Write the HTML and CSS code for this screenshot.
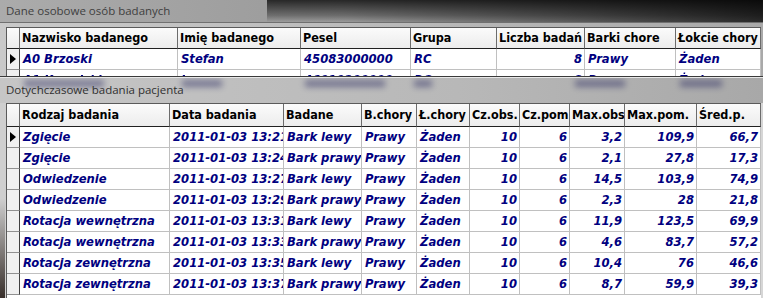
FILE: index.html
```html
<!DOCTYPE html>
<html lang="pl">
<head>
  <meta charset="UTF-8">
  <title>Badania pacjenta</title>
  <link rel="stylesheet" href="styles.css">
</head>
<body>

  <!-- okno z danymi osobowymi (w tle) -->
  <div class="win winTop">
    <div class="caption captionTop">Dane osobowe osób badanych</div>
    <div class="frame">
      <div class="grid gridPeople">
        <div class="row head">
          <div class="sel"></div>
          <div>Nazwisko badanego</div>
          <div>Imię badanego</div>
          <div>Pesel</div>
          <div>Grupa</div>
          <div>Liczba badań</div>
          <div>Barki chore</div>
          <div>Łokcie chory</div>
        </div>
        <div class="row">
          <div class="sel cur"></div>
          <div>A0 Brzoski</div>
          <div>Stefan</div>
          <div>45083000000</div>
          <div>RC</div>
          <div class="num">8</div>
          <div>Prawy</div>
          <div>Żaden</div>
        </div>
        <div class="row peek">
          <div class="sel"></div>
          <div>A1 Kowalski</div>
          <div>Jan</div>
          <div>46010200000</div>
          <div>RC</div>
          <div class="num">8</div>
          <div>Prawy</div>
          <div>Żaden</div>
        </div>
      </div>
    </div>
  </div>

  <!-- okno z badaniami -->
  <div class="win winTests">
    <div class="caption captionTests">
      <div class="glass">
        <i class="g1"></i><i class="g2"></i><i class="g3"></i><i class="g4"></i><i class="g5"></i><i class="g6"></i>
      </div>
      <span class="capText">Dotychczasowe badania pacjenta</span>
    </div>
    <div class="frame">
      <div class="grid gridTests">
        <div class="row head">
          <div class="sel"></div>
          <div>Rodzaj badania</div>
          <div>Data badania</div>
          <div>Badane</div>
          <div>B.chory</div>
          <div>Ł.chory</div>
          <div>Cz.obs.</div>
          <div>Cz.pom</div>
          <div>Max.obs</div>
          <div>Max.pom.</div>
          <div>Śred.p.</div>
        </div>
        <div class="row">
          <div class="sel cur"></div>
          <div>Zgięcie</div><div>2011-01-03 13:21</div><div>Bark lewy</div><div>Prawy</div><div>Żaden</div>
          <div class="num">10</div><div class="num">6</div><div class="num">3,2</div><div class="num">109,9</div><div class="num">66,7</div>
        </div>
        <div class="row">
          <div class="sel"></div>
          <div>Zgięcie</div><div>2011-01-03 13:24</div><div>Bark prawy</div><div>Prawy</div><div>Żaden</div>
          <div class="num">10</div><div class="num">6</div><div class="num">2,1</div><div class="num">27,8</div><div class="num">17,3</div>
        </div>
        <div class="row">
          <div class="sel"></div>
          <div>Odwiedzenie</div><div>2011-01-03 13:27</div><div>Bark lewy</div><div>Prawy</div><div>Żaden</div>
          <div class="num">10</div><div class="num">6</div><div class="num">14,5</div><div class="num">103,9</div><div class="num">74,9</div>
        </div>
        <div class="row">
          <div class="sel"></div>
          <div>Odwiedzenie</div><div>2011-01-03 13:29</div><div>Bark prawy</div><div>Prawy</div><div>Żaden</div>
          <div class="num">10</div><div class="num">6</div><div class="num">2,3</div><div class="num">28</div><div class="num">21,8</div>
        </div>
        <div class="row">
          <div class="sel"></div>
          <div>Rotacja wewnętrzna</div><div>2011-01-03 13:31</div><div>Bark lewy</div><div>Prawy</div><div>Żaden</div>
          <div class="num">10</div><div class="num">6</div><div class="num">11,9</div><div class="num">123,5</div><div class="num">69,9</div>
        </div>
        <div class="row">
          <div class="sel"></div>
          <div>Rotacja wewnętrzna</div><div>2011-01-03 13:33</div><div>Bark prawy</div><div>Prawy</div><div>Żaden</div>
          <div class="num">10</div><div class="num">6</div><div class="num">4,6</div><div class="num">83,7</div><div class="num">57,2</div>
        </div>
        <div class="row">
          <div class="sel"></div>
          <div>Rotacja zewnętrzna</div><div>2011-01-03 13:35</div><div>Bark lewy</div><div>Prawy</div><div>Żaden</div>
          <div class="num">10</div><div class="num">6</div><div class="num">10,4</div><div class="num">76</div><div class="num">46,6</div>
        </div>
        <div class="row">
          <div class="sel"></div>
          <div>Rotacja zewnętrzna</div><div>2011-01-03 13:37</div><div>Bark prawy</div><div>Prawy</div><div>Żaden</div>
          <div class="num">10</div><div class="num">6</div><div class="num">8,7</div><div class="num">59,9</div><div class="num">39,3</div>
        </div>
      </div>
    </div>
  </div>

</body>
</html>
```

FILE: styles.css
```css
* {
  box-sizing: border-box;
}
html, body {
  margin: 0;
  height: 100%;
}
body {
  width: 763px;
  height: 298px;
  overflow: hidden;
  background: #1c1714;
}

/* okna */
.win {
  position: relative;
  overflow: hidden;
}
.winTop {
  height: 77px;
  background: linear-gradient(to right, #c9c9c9 0%, #b9b9b9 55%, #a9a9a9 100%);
  border-bottom: 1px solid #3a3a3a;
}
.winTests {
  height: 221px;
  background:
    linear-gradient(to bottom, rgba(0,0,0,0) 55%, rgba(40,30,25,.9) 100%) left top / 5px 100% no-repeat,
    linear-gradient(to right, #cfcfcf, #d6d6d6);
}

.caption {
  font-family: "Open Sans", "Noto Sans", sans-serif;
  font-size: 11.5px;
  color: #303030;
  padding-left: 6px;
  white-space: nowrap;
}
.captionTop {
  height: 23px;
  line-height: 21px;
  background:
    linear-gradient(to bottom, rgba(0,0,0,.75) 0%, rgba(0,0,0,.3) 70%, rgba(0,0,0,0) 100%) right top / 65% 100% no-repeat,
    linear-gradient(to right, #ababab 0%, #9a9a9a 45%, #2a2a2a 100%);
  border-bottom: 1px solid #707070;
  color: #404040;
}
.captionTests {
  position: relative;
  height: 26px;
  line-height: 24px;
  overflow: hidden;
  background: linear-gradient(to right, #c6c6c6 0%, #b8b8b8 60%, #a8a8a8 100%);
  border-top: 1px solid #e8e8e8;
}
.capText {
  position: relative;
  z-index: 1;
}
/* rozmyta zawartość okna pod spodem (efekt szkła) */
.glass {
  position: absolute;
  left: 0; top: 0;
  width: 763px;
  height: 10px;
  filter: blur(3px);
  opacity: .45;
}
.glass i {
  position: absolute;
  top: 2px;
  height: 7px;
  background: #1e1e5a;
}
.glass .g1 { left: 24px; width: 80px; }
.glass .g2 { left: 182px; width: 40px; }
.glass .g3 { left: 305px; width: 80px; }
.glass .g4 { left: 414px; width: 18px; }
.glass .g5 { left: 575px; width: 50px; }
.glass .g6 { left: 680px; width: 42px; }

.frame {
  padding: 4px 2px 0 6px;
}
.winTests .frame {
  padding-top: 0;
}

/* siatki danych */
.grid {
  background: #fff;
  border-top: 1px solid #5a5a5a;
  border-left: 1px solid #5a5a5a;
  width: 755px;
  height: 300px;
}
.gridPeople {
  height: 52px;
  overflow: hidden;
}
.row {
  display: grid;
  height: 21px;
}
.row.peek > div {
  filter: blur(.6px);
}
.gridPeople .row {
  grid-template-columns: 13px 158px 123px 110px 86px 88px 91px 85px;
}
.gridTests .row {
  grid-template-columns: 13px 150px 114px 78px 55px 53px 50px 50px 55px 72px 64px;
}
.row > div {
  overflow: hidden;
  white-space: nowrap;
  border-right: 1px solid #c0c0c0;
  border-bottom: 1px solid #c0c0c0;
  padding: 0 2px 0 3px;
  font: italic bold 11.6px "DejaVu Sans", Verdana, sans-serif;
  color: #000080;
  line-height: 20px;
}
.row > .num {
  text-align: right;
  padding-right: 2px;
}
.gridTests .row.head {
  height: 23px;
}
.row.head > div {
  font: bold 12.5px "DejaVu Sans Condensed", "DejaVu Sans", sans-serif;
  color: #000;
  background: linear-gradient(to bottom, #fbfbfb, #ececec);
  border-right: 1px solid #6c6c6c;
  border-bottom: 1px solid #202020;
  padding-left: 2px;
  line-height: 20px;
}
.gridTests .row.head > div {
  line-height: 22px;
}
.row > .sel {
  background: #f0f0f0;
  border-right: 1px solid #404040;
  border-bottom: 1px solid #909090;
  padding: 0;
  position: relative;
}
.sel.cur::after {
  content: "";
  position: absolute;
  left: 3px;
  top: 5px;
  border-left: 6px solid #000;
  border-top: 5px solid transparent;
  border-bottom: 5px solid transparent;
}
```
